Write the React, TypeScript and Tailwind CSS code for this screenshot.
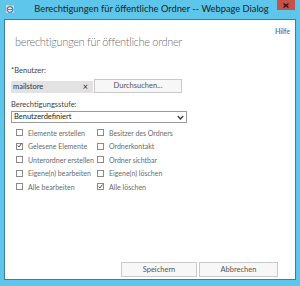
import React from "react";

const FONT = { fontFamily: 'Lato, "Open Sans", sans-serif' };

// linke und rechte Spalte der Berechtigungen
const LEFT = [
  { label: "Elemente erstellen", checked: false },
  { label: "Gelesene Elemente", checked: true },
  { label: "Unterordner erstellen", checked: false },
  { label: "Eigene(n) bearbeiten", checked: false },
  { label: "Alle bearbeiten", checked: false },
];
const RIGHT = [
  { label: "Besitzer des Ordners", checked: false },
  { label: "Ordnerkontakt", checked: false },
  { label: "Ordner sichtbar", checked: false },
  { label: "Eigene(n) löschen", checked: false },
  { label: "Alle löschen", checked: true },
];

function Check({ label, checked }: { label: string; checked: boolean }) {
  return (
    <div className="flex items-center h-[13.5px]">
      <span className="w-[7px] h-[7px] border border-[#8a8a8a] bg-white flex items-center justify-center shrink-0">
        {checked && (
          <svg width="7" height="7" viewBox="0 0 7 7" className="-mt-[1px]">
            <path d="M1 3.5 L2.8 5.5 L6.3 0.8" fill="none" stroke="#222" strokeWidth="1.2" />
          </svg>
        )}
      </span>
      <span className="ml-[5px] text-[7px] text-[#6a6a6a] whitespace-nowrap">{label}</span>
    </div>
  );
}

function IeIcon() {
  return (
    <svg width="10" height="10" viewBox="0 0 10 10">
      <rect x="1" y="1" width="8" height="8" fill="#f4f8fb" stroke="#9ab" strokeWidth="0.6" />
      <circle cx="5" cy="5.5" r="2.8" fill="none" stroke="#2c86d6" strokeWidth="1.3" />
      <path d="M2.4 5.5 H7.6" stroke="#2c86d6" strokeWidth="1" />
      <path d="M1 4 Q4 0 9 2" fill="none" stroke="#f2b623" strokeWidth="1" />
    </svg>
  );
}

export default function App() {
  return (
    <div className="w-[300px] h-[286px] bg-[#5ec6ea] flex flex-col" style={FONT}>
      {/* Titelleiste */}
      <div className="h-[19px] flex items-center relative shrink-0">
        <div className="ml-[5px] mt-[-1px]">
          <IeIcon />
        </div>
        <div className="flex-1 text-center text-[9.3px] text-[#1d1d1d] pr-[12px] -mt-[1px]">
          Berechtigungen für öffentliche Ordner -- Webpage Dialog
        </div>
        <div className="absolute right-[5px] top-0 w-[18px] h-[10px] bg-[#c8504a] flex items-center justify-center">
          <svg width="6" height="5" viewBox="0 0 6 5">
            <path d="M0.5 0.5 L5.5 4.5 M5.5 0.5 L0.5 4.5" stroke="#1a1a1a" strokeWidth="1.3" />
          </svg>
        </div>
      </div>

      {/* Inhalt */}
      <div className="mx-[4px] mb-[6px] flex-1 bg-white border border-[#3f7d99] flex flex-col relative">
        <div className="flex justify-end pr-[5px] pt-[8px] h-[17px]">
          <span className="text-[7px] font-bold text-[#2f8ad0] leading-none">Hilfe</span>
        </div>
        <div className="pl-[10px] text-[11px] tracking-[-0.3px] font-light text-[#6f6f6f] leading-none -mt-[1px]">
          berechtigungen für öffentliche ordner
        </div>

        <div className="pl-[6px] mt-[20px] text-[7.5px] text-[#444] leading-none">*Benutzer:</div>
        <div className="flex items-center pl-[6px] mt-[4px] h-[14px]">
          <div className="w-[82px] h-[12px] bg-[#e2e2e2] flex items-center justify-between px-[2px] mt-[2px]">
            <span className="text-[7.5px] text-[#333]">mailstore</span>
            <span className="text-[9px] text-[#333] leading-none mr-[3px]">×</span>
          </div>
          <div className="ml-[1px] w-[88px] h-[14px] border border-[#c9c9c9] bg-[#f7f7f7] flex items-center justify-center text-[7.5px] text-[#555]">
            Durchsuchen...
          </div>
        </div>

        <div className="pl-[6px] mt-[8px] text-[7.5px] text-[#444] leading-none">Berechtigungsstufe:</div>
        <div className="ml-[6px] mt-[3px] w-[176px] h-[12px] border border-[#9a9a9a] flex items-center justify-between px-[2px]">
          <span className="text-[7.5px] text-[#222]">Benutzerdefiniert</span>
          <svg width="7" height="5" viewBox="0 0 7 5">
            <path d="M0.8 1 L3.5 4 L6.2 1" fill="none" stroke="#333" strokeWidth="1.2" />
          </svg>
        </div>

        <div className="flex pl-[11px] mt-[3px]">
          <div className="w-[81px] flex flex-col">
            {LEFT.map(c => (
              <Check key={c.label} {...c} />
            ))}
          </div>
          <div className="flex flex-col">
            {RIGHT.map(c => (
              <Check key={c.label} {...c} />
            ))}
          </div>
        </div>

        <div className="mt-auto mb-[2px] flex justify-end pr-[17px] gap-[2px]">
          <div className="w-[76px] h-[15px] border border-[#c9c9c9] bg-[#f7f7f7] flex items-center justify-center text-[7.5px] text-[#555]">
            Speichern
          </div>
          <div className="w-[79px] h-[15px] border border-[#c9c9c9] bg-[#f7f7f7] flex items-center justify-center text-[7.5px] text-[#555]">
            Abbrechen
          </div>
        </div>
      </div>
    </div>
  );
}
